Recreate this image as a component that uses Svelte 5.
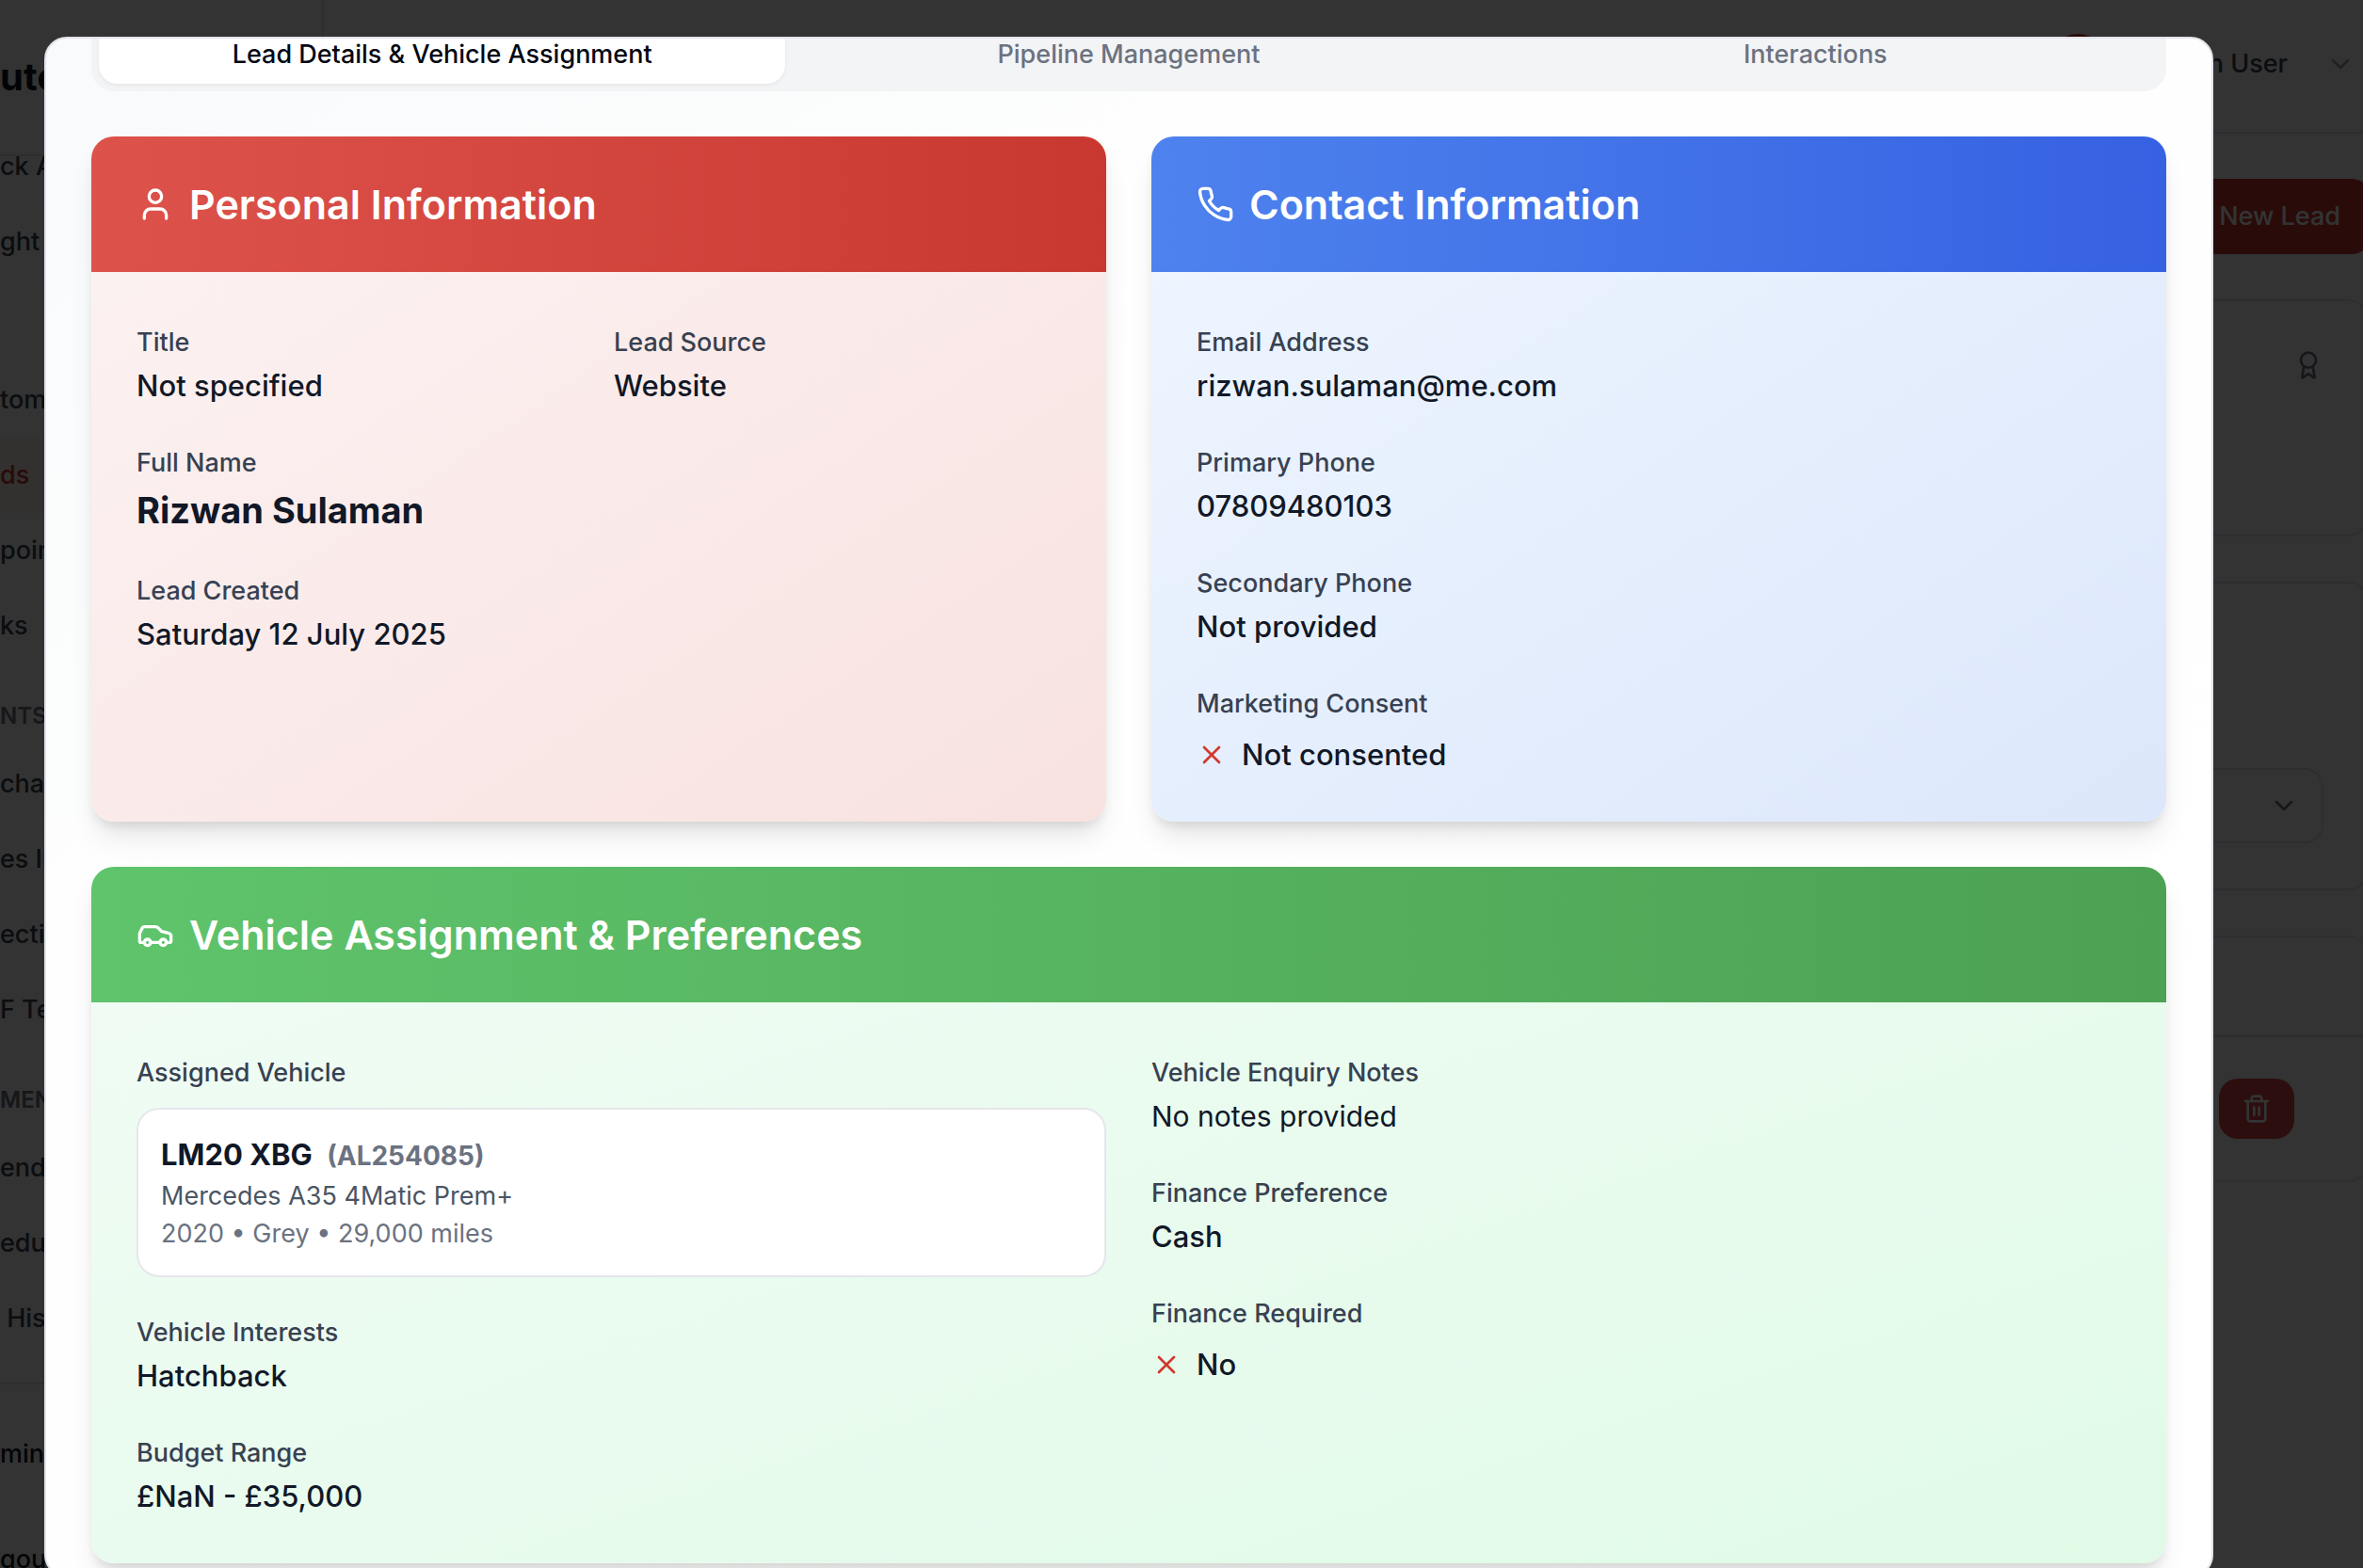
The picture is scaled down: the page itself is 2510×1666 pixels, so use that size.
<script>
  const navTop = [
    { text: 'ck Actions' },
    { text: 'ght' }
  ];
  const navMain = [
    { text: 'tomers' },
    { text: 'ds', active: true },
    { text: 'pointments' },
    { text: 'ks' }
  ];
  const navDocs = ['chase', 'es Invoices', 'ections', 'F Templates'];
  const navManage = ['endar', 'edule', ' History'];

  const tabs = ['Lead Details & Vehicle Assignment', 'Pipeline Management', 'Interactions'];
  let current = $state(0);

  const contact = [
    ['Email Address', 'rizwan.sulaman@me.com'],
    ['Primary Phone', '07809480103'],
    ['Secondary Phone', 'Not provided']
  ];
</script>

{#snippet cross()}
  <svg class="icon cross" viewBox="0 0 24 24" aria-hidden="true"><path d="M18 6 6 18" /><path d="m6 6 12 12" /></svg>
{/snippet}

{#snippet chevron()}
  <svg class="icon" viewBox="0 0 24 24" aria-hidden="true"><path d="m6 9 6 6 6-6" /></svg>
{/snippet}

{#snippet field(label, value)}
  <div class="field">
    <dt>{label}</dt>
    <dd>{value}</dd>
  </div>
{/snippet}

<div class="screen">
  <div class="page">
    <aside class="sidebar">
      <div class="brand">uto</div>
      <nav>
        <div class="group first">
          {#each navTop as item}
            <a href="#nav">{item.text}</a>
          {/each}
        </div>
        <div class="group main-group">
          {#each navMain as item}
            <a href="#nav" class:active={item.active}>{item.text}</a>
          {/each}
        </div>
        <h2>NTS</h2>
        <div class="group">
          {#each navDocs as item}<a href="#nav">{item}</a>{/each}
        </div>
        <h2>MENT</h2>
        <div class="group">
          {#each navManage as item}<a href="#nav">{item}</a>{/each}
        </div>
      </nav>
      <div class="account">
        <span>min</span>
        <a href="#logout">gout</a>
      </div>
    </aside>

    <main>
      <header class="topbar">
        <span class="avatar"></span>
        <span class="user">Admin User</span>
        {@render chevron()}
      </header>
      <div class="content">
        <button class="new-lead">New Lead</button>
        <section class="panel stat">
          <svg class="icon" viewBox="0 0 24 24" aria-hidden="true">
            <path d="m15.477 12.89 1.515 8.526a.5.5 0 0 1-.81.47l-3.58-2.687a1 1 0 0 0-1.197 0l-3.586 2.686a.5.5 0 0 1-.81-.469l1.514-8.526" />
            <circle cx="12" cy="8" r="6" />
          </svg>
        </section>
        <section class="panel filters">
          <button class="picker" aria-label="Filter">{@render chevron()}</button>
        </section>
        <section class="panel list">
          <div class="list-head"></div>
          <div class="list-row">
            <button class="delete" aria-label="Delete lead">
              <svg class="icon" viewBox="0 0 24 24" aria-hidden="true">
                <path d="M3 6h18" /><path d="M19 6v14c0 1-1 2-2 2H7c-1 0-2-1-2-2V6" />
                <path d="M8 6V4c0-1 1-2 2-2h4c1 0 2 1 2 2v2" /><path d="M10 11v6" /><path d="M14 11v6" />
              </svg>
            </button>
          </div>
        </section>
      </div>
    </main>
  </div>

  <div class="overlay"></div>

  <div class="dialog" role="dialog" aria-label="Lead details">
    <div class="scrolled">
      <div class="tabs" role="tablist">
        {#each tabs as tab, i}
          <button role="tab" aria-selected={current === i} class:selected={current === i} onclick={() => (current = i)}>{tab}</button>
        {/each}
      </div>

      <div class="cards">
        <section class="card red">
          <h3>
            <svg class="icon large" viewBox="0 0 24 24" aria-hidden="true">
              <path d="M19 21v-2a4 4 0 0 0-4-4H9a4 4 0 0 0-4 4v2" /><circle cx="12" cy="7" r="4" />
            </svg>
            Personal Information
          </h3>
          <dl class="body">
            <div class="pair">
              {@render field('Title', 'Not specified')}
              {@render field('Lead Source', 'Website')}
            </div>
            <div class="field name">
              <dt>Full Name</dt>
              <dd>Rizwan Sulaman</dd>
            </div>
            {@render field('Lead Created', 'Saturday 12 July 2025')}
          </dl>
        </section>

        <section class="card blue">
          <h3>
            <svg class="icon large" viewBox="0 0 24 24" aria-hidden="true">
              <path d="M22 16.92v3a2 2 0 0 1-2.18 2 19.79 19.79 0 0 1-8.63-3.07 19.5 19.5 0 0 1-6-6 19.79 19.79 0 0 1-3.07-8.67A2 2 0 0 1 4.11 2h3a2 2 0 0 1 2 1.72 12.84 12.84 0 0 0 .7 2.81 2 2 0 0 1-.45 2.11L8.09 9.91a16 16 0 0 0 6 6l1.27-1.27a2 2 0 0 1 2.11-.45 12.84 12.84 0 0 0 2.81.7A2 2 0 0 1 22 16.92z" />
            </svg>
            Contact Information
          </h3>
          <dl class="body">
            {#each contact as [label, value]}
              {@render field(label, value)}
            {/each}
            <div class="field">
              <dt>Marketing Consent</dt>
              <dd class="flag">{@render cross()}Not consented</dd>
            </div>
          </dl>
        </section>

        <section class="card green">
          <h3>
            <svg class="icon large" viewBox="0 0 24 24" aria-hidden="true">
              <path d="M19 17h2c.6 0 1-.4 1-1v-3c0-.9-.7-1.7-1.5-1.9C18.7 10.6 16 10 16 10s-1.3-1.4-2.2-2.3c-.5-.4-1.1-.7-1.8-.7H5c-.6 0-1.1.4-1.4.9l-1.4 2.9A3.7 3.7 0 0 0 2 12v4c0 .6.4 1 1 1h2" />
              <circle cx="7" cy="17" r="2" /><path d="M9 17h6" /><circle cx="17" cy="17" r="2" />
            </svg>
            Vehicle Assignment &amp; Preferences
          </h3>
          <div class="body halves">
            <dl class="column">
              <div class="field">
                <dt>Assigned Vehicle</dt>
                <dd class="vehicle">
                  <p class="plate">LM20 XBG <span>(AL254085)</span></p>
                  <p class="model">Mercedes A35 4Matic Prem+</p>
                  <p class="spec">2020 • Grey • 29,000 miles</p>
                </dd>
              </div>
              {@render field('Vehicle Interests', 'Hatchback')}
              {@render field('Budget Range', '£NaN - £35,000')}
            </dl>
            <dl class="column">
              <div class="field notes">
                <dt>Vehicle Enquiry Notes</dt>
                <dd>No notes provided</dd>
              </div>
              {@render field('Finance Preference', 'Cash')}
              <div class="field">
                <dt>Finance Required</dt>
                <dd class="flag">{@render cross()}No</dd>
              </div>
            </dl>
          </div>
        </section>
      </div>
    </div>
  </div>
</div>

<style>
  :global(body) { margin: 0; }

  .screen {
    position: relative;
    height: 100vh;
    overflow: hidden;
    font-family: Inter, Roboto, sans-serif;
    font-size: 32px;
    line-height: 48px;
    color: #111827;
    background: #fff;
  }
  .screen *, .screen { box-sizing: border-box; }
  h2, h3, p, dl, dd { margin: 0; }
  a { color: inherit; text-decoration: none; }
  button { font: inherit; border: 0; cursor: pointer; }

  .icon {
    width: 32px;
    height: 32px;
    flex: none;
    fill: none;
    stroke: currentColor;
    stroke-width: 2;
    stroke-linecap: round;
    stroke-linejoin: round;
  }
  .icon.large { width: 40px; height: 40px; }
  .cross { color: #d0392e; }

  /* page behind the dialog */
  .page {
    display: grid;
    grid-template-columns: 344px 1fr;
    width: calc(100% + 8px);
    height: 100%;
    font-size: 27px;
    line-height: 40px;
    font-weight: 500;
  }
  .sidebar {
    border-right: 2px solid #e5e7eb;
    color: #374151;
    overflow: hidden;
  }
  .brand {
    height: 166px;
    padding-top: 62px;
    border-bottom: 2px solid #e5e7eb;
    font-size: 40px;
    font-weight: 700;
    color: #111827;
    margin-bottom: -29px;
  }
  .group a {
    display: flex;
    align-items: center;
    height: 80px;
    white-space: pre;
  }
  .main-group { padding-top: 88px; }
  .group a.active { color: #c8372f; background: #fdf0f0; }
  h2 {
    padding-top: 32px;
    height: 88px;
    font-size: 24px;
    line-height: 48px;
    font-weight: 600;
    color: #6b7280;
  }
  .account {
    display: flex;
    flex-direction: column;
    gap: 72px;
    margin-top: 28px;
    padding-top: 54px;
    border-top: 2px solid #e5e7eb;
    color: #111827;
  }

  main { min-width: 0; }
  .topbar {
    display: flex;
    align-items: center;
    justify-content: flex-end;
    height: 142px;
    padding: 0 16px 4px 0;
    border-bottom: 2px solid #e5e7eb;
    gap: 40px;
    color: #9ca3af;
  }
  .avatar { width: 64px; height: 64px; border-radius: 50%; background: #cd372d; }
  .user { color: #374151; }
  .content {
    display: flex;
    flex-direction: column;
    gap: 48px;
    padding-top: 48px;
    padding-left: 48px;
  }
  .new-lead {
    align-self: flex-end;
    height: 80px;
    padding: 0 32px;
    border-radius: 20px;
    color: #fff;
    background: #cd372d;
  }
  .panel {
    display: flex;
    border: 2px solid #e5e7eb;
    border-radius: 24px;
  }
  .stat { height: 252px; padding: 52px 48px; justify-content: flex-end; color: #6b7280; }
  .filters { height: 328px; padding: 48px; align-items: flex-end; }
  .picker {
    display: flex;
    align-items: center;
    justify-content: flex-end;
    width: 100%;
    height: 80px;
    padding: 0 24px;
    border: 2px solid #e5e7eb;
    border-radius: 20px;
    color: #6b7280;
    background: transparent;
  }
  .list { height: 262px; flex-direction: column; }
  .list-head { height: 106px; border-bottom: 2px solid #e5e7eb; }
  .list-row {
    display: flex;
    flex: 1;
    align-items: center;
    justify-content: flex-end;
    padding-right: 79px;
  }
  .delete {
    display: flex;
    align-items: center;
    height: 64px;
    padding: 0 24px;
    border-radius: 20px;
    color: #fff;
    background: #dc4646;
  }
  .overlay { position: absolute; inset: 0; background: rgba(0, 0, 0, 0.8); }

  /* dialog, its content scrolled a little past the top of the tabs */
  .dialog {
    position: absolute;
    inset: 39px 159px -10px 47px;
    overflow: hidden;
    border: 2px solid #e2e3ea;
    border-radius: 24px;
    background: linear-gradient(to bottom right, #f8fafc, #fdfefd 30%, #fff);
  }
  .scrolled { margin-top: -24px; padding: 0 48px; }
  .tabs {
    display: grid;
    grid-template-columns: repeat(3, 1fr);
    height: 80px;
    padding: 8px;
    border-radius: 24px;
    background: #f3f4f6;
  }
  .tabs button {
    padding: 2px 0 0;
    border-radius: 20px;
    font-size: 27px;
    font-weight: 500;
    line-height: 40px;
    color: #6b7280;
    background: transparent;
  }
  .tabs button.selected {
    color: #030712;
    background: #fff;
    box-shadow: 0 2px 4px rgba(0, 0, 0, 0.06);
  }

  .cards {
    display: grid;
    grid-template-columns: 1fr 1fr;
    gap: 48px;
    margin-top: 48px;
  }
  .card {
    overflow: hidden;
    border-radius: 24px;
    box-shadow: 0 20px 30px -6px rgba(0, 0, 0, 0.1), 0 8px 12px -4px rgba(0, 0, 0, 0.1);
  }
  .card h3 {
    display: flex;
    align-items: center;
    gap: 16px;
    padding: 48px;
    font-size: 43px;
    line-height: 48px;
    font-weight: 600;
    color: #fff;
  }
  .red { background: linear-gradient(to bottom right, #fcf3f3, #f8e2e0); }
  .red h3 { background: linear-gradient(to right, #dd534c, #c83830); }
  .blue { background: linear-gradient(to bottom right, #eff6ff, #dce7fb); }
  .blue h3 { background: linear-gradient(to right, #4e82ee, #3661e2); }
  .green { grid-column: 1 / -1; background: linear-gradient(to bottom right, #f2fcf5, #e0fae7); }
  .green h3 { background: linear-gradient(to right, #5fc46c, #4da153); }

  .body {
    display: flex;
    flex-direction: column;
    gap: 32px;
    padding: 48px;
  }
  .pair { display: grid; grid-template-columns: 1fr 1fr; gap: 32px; }
  .body.halves { display: grid; grid-template-columns: 1fr 1fr; gap: 48px; }
  .column { display: flex; flex-direction: column; gap: 32px; }
  dt {
    padding-top: 6px;
    font-size: 27px;
    line-height: 42px;
    font-weight: 500;
    color: #374151;
  }
  dd { padding-top: 2px; font-size: 31px; line-height: 46px; font-weight: 500; }
  .name dd { font-size: 38px; line-height: 54px; font-weight: 700; }
  .notes dd { font-size: 30px; font-weight: 400; }
  .flag { display: flex; align-items: center; gap: 16px; margin-top: 8px; }
  .vehicle {
    margin-top: 16px;
    padding: 24px;
    border: 2px solid #e5e7eb;
    border-radius: 24px;
    background: #fff;
  }
  .plate { line-height: 48px; font-weight: 700; }
  .plate span { margin-left: 8px; font-size: 28px; line-height: 32px; color: #6b7280; }
  .model, .spec { font-size: 27px; line-height: 40px; font-weight: 400; color: #4b5563; }
  .spec { color: #6b7280; }
</style>
